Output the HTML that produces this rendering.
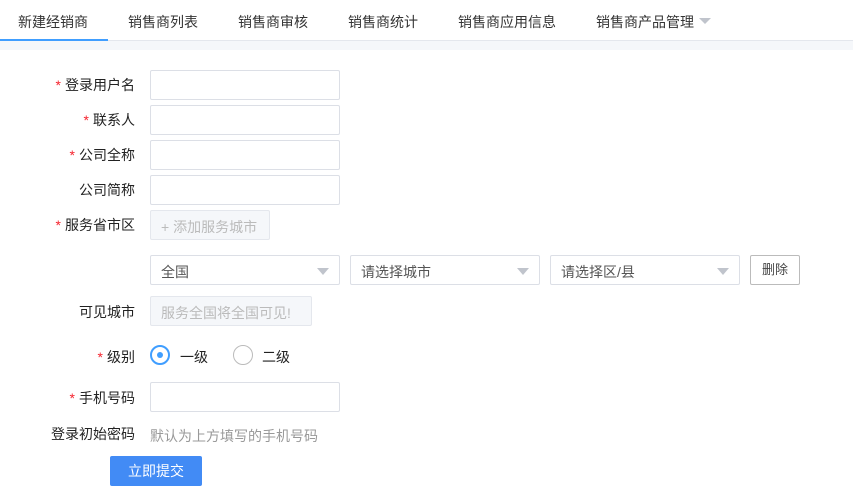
<!DOCTYPE html>
<html><head><meta charset="utf-8"><style>
*{box-sizing:border-box;margin:0;padding:0}
body{width:853px;height:504px;background:#fff;font-family:"Liberation Sans","Noto Sans CJK SC",sans-serif;font-size:14px;color:#333;position:relative;overflow:hidden}
.a{position:absolute}
.tabs{left:0;top:0;width:853px;height:41px;border-bottom:1px solid #e4e7ed}
.tab{top:12px;font-size:14px;color:#333}
.strip{left:0;top:41px;width:853px;height:9px;background:#f5f7fa}
.lbl{width:135px;left:0;text-align:right;color:#222;font-size:14px}
.lbl i{color:#f5222d;font-style:normal;margin-right:4px}
.inp{left:150px;width:190px;height:30px;border:1px solid #dcdfe6;border-radius:2px;background:#fff}
.sel{height:30px;border:1px solid #dcdfe6;border-radius:2px;width:190px;padding:6px 10px;color:#555}
.sel:after{content:"";position:absolute;right:10px;top:12px;border-left:6px solid transparent;border-right:6px solid transparent;border-top:7px solid #c0c4cc}
.dis{background:#f5f7fa;border:1px solid #e4e7ed;color:#bbb;border-radius:2px;padding:6px 10px}
</style></head><body>
<div class="a tabs"></div>
<div class="a" style="left:0;top:39px;width:108px;height:2px;background:#409eff"></div>
<div class="a tab" style="left:18px">新建经销商</div>
<div class="a tab" style="left:128px">销售商列表</div>
<div class="a tab" style="left:238px">销售商审核</div>
<div class="a tab" style="left:348px">销售商统计</div>
<div class="a tab" style="left:458px">销售商应用信息</div>
<div class="a tab" style="left:596px">销售商产品管理</div>
<div class="a" style="left:699px;top:18px;border-left:6px solid transparent;border-right:6px solid transparent;border-top:6px solid #c0c4cc"></div>
<div class="a strip"></div>

<div class="a lbl" style="top:75px"><i>*</i>登录用户名</div>
<div class="a inp" style="top:70px"></div>
<div class="a lbl" style="top:110px"><i>*</i>联系人</div>
<div class="a inp" style="top:105px"></div>
<div class="a lbl" style="top:145px"><i>*</i>公司全称</div>
<div class="a inp" style="top:140px"></div>
<div class="a lbl" style="top:180px">公司简称</div>
<div class="a inp" style="top:175px"></div>
<div class="a lbl" style="top:215px"><i>*</i>服务省市区</div>
<div class="a dis" style="left:150px;top:210px;width:120px;height:30px">+ 添加服务城市</div>

<div class="a sel" style="left:150px;top:255px">全国</div>
<div class="a sel" style="left:350px;top:255px">请选择城市</div>
<div class="a sel" style="left:550px;top:255px">请选择区/县</div>
<div class="a" style="left:750px;top:255px;width:50px;height:30px;border:1px solid #bbb;border-radius:2px;text-align:center;line-height:28px;font-size:13px;color:#444">删除</div>

<div class="a lbl" style="top:302px">可见城市</div>
<div class="a dis" style="left:150px;top:296px;width:162px;height:30px">服务全国将全国可见!</div>

<div class="a lbl" style="top:347px"><i>*</i>级别</div>
<div class="a" style="left:150px;top:345px;width:20px;height:20px;border:2px solid #409eff;border-radius:50%"></div>
<div class="a" style="left:157px;top:352px;width:6px;height:6px;background:#409eff;border-radius:50%"></div>
<div class="a" style="left:180px;top:347px;color:#222">一级</div>
<div class="a" style="left:233px;top:345px;width:20px;height:20px;border:1px solid #bbb;border-radius:50%"></div>
<div class="a" style="left:262px;top:347px;color:#222">二级</div>

<div class="a lbl" style="top:388px"><i>*</i>手机号码</div>
<div class="a inp" style="top:382px"></div>
<div class="a lbl" style="top:424px">登录初始密码</div>
<div class="a" style="left:150px;top:426px;color:#999">默认为上方填写的手机号码</div>
<div class="a" style="left:110px;top:456px;width:92px;height:30px;background:#428bf5;border-radius:2px;color:#fff;text-align:center;line-height:30px">立即提交</div>
</body></html>
